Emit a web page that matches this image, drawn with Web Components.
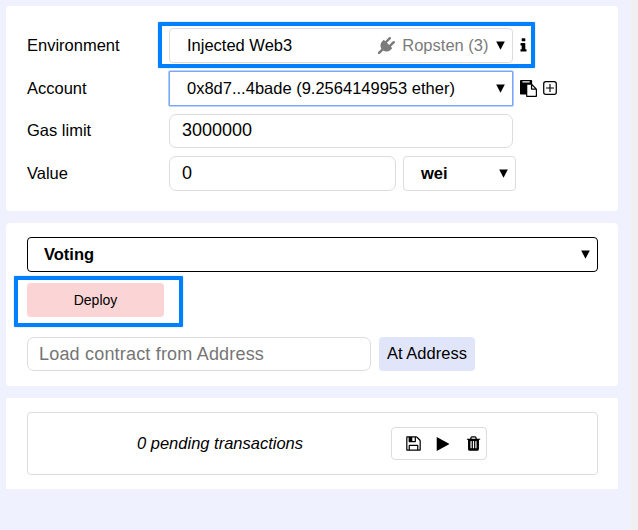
<!DOCTYPE html>
<html lang="en">
<head>
<meta charset="utf-8">
<title>Deploy and run</title>
<style>
html,body{margin:0;height:100%;overflow:hidden}
body{font:16.5px/20px "Liberation Sans",Arial,sans-serif;color:#000;background:#eff1ff}
</style>
</head>
<body>
<run-app></run-app>
<script>
const define = (name, markup, init) => {
  customElements.define(name, class extends HTMLElement {
    constructor() {
      super();
      this.attachShadow({ mode: 'open' }).innerHTML = markup;
    }
    connectedCallback() { if (init) init(this, this.shadowRoot); }
  });
};

const icons = {
  plug: '<path d="M1755 453q37 38 37 90.5t-37 90.5l-401 400 150 150-160 160q-163 163-389.5 186.5t-411.5-100.5l-362 362h-181v-181l362-362q-124-185-100.5-411.5t186.5-389.5l160-160 150 150 400-401q38-37 91-37t90 37 37 90.5-37 90.5l-400 401 234 234 401-400q38-37 91-37t90 37z"/>',
  info: '<path d="M1216 1344v128q0 26-19 45t-45 19h-512q-26 0-45-19t-19-45v-128q0-26 19-45t45-19h64v-384h-64q-26 0-45-19t-19-45v-128q0-26 19-45t45-19h384q26 0 45 19t19 45v576h64q26 0 45 19t19 45zm-128-1152v192q0 26-19 45t-45 19h-256q-26 0-45-19t-19-45v-192q0-26 19-45t45-19h256q26 0 45 19t19 45z"/>',
  paste: '<path d="M768 1664h896v-640h-416q-40 0-68-28t-28-68v-416h-384v1152zm256-1440v-64q0-13-9.5-22.5t-22.5-9.5h-704q-13 0-22.5 9.5t-9.5 22.5v64q0 13 9.5 22.5t22.5 9.5h704q13 0 22.5-9.5t9.5-22.5zm256 672h299l-299-299v299zm512 128v672q0 40-28 68t-68 28h-960q-40 0-68-28t-28-68v-160h-544q-40 0-68-28t-28-68v-1344q0-40 28-68t68-28h1088q40 0 68 28t28 68v328q21 13 36 28l408 408q28 28 48 76t20 88z"/>',
  plus: '<rect x="192" y="192" width="1408" height="1408" rx="240" fill="none" stroke="currentColor" stroke-width="140"/><path d="M832 448h128v384h384v128H960v384H832V960H448V832h384z"/>',
  save: '<path d="M512 1536h768v-384h-768v384zm896 0h128v-896q0-14-10-38.5t-20-34.5l-281-281q-10-10-34-20t-39-10v416q0 40-28 68t-68 28h-576q-40 0-68-28t-28-68v-416h-128v1280h128v-416q0-40 28-68t68-28h832q40 0 68 28t28 68v416zm-384-928v-320q0-13-9.5-22.5t-22.5-9.5h-192q-13 0-22.5 9.5t-9.5 22.5v320q0 13 9.5 22.5t22.5 9.5h192q13 0 22.5-9.5t9.5-22.5zm640 32v928q0 40-28 68t-68 28h-1344q-40 0-68-28t-28-68v-1344q0-40 28-68t68-28h928q40 0 88 20t76 48l280 280q28 28 48 76t20 88z"/>',
  play: '<path d="M1576 927l-1328 738q-23 13-39.500 3t-16.500-36v-1472q0-26 16.500-36t39.500 3l1328 738q23 13 23 31t-23 31z"/>',
  trash: '<path d="M704 1376v-704q0-14-9-23t-23-9h-64q-14 0-23 9t-9 23v704q0 14 9 23t23 9h64q14 0 23-9t9-23zm256 0v-704q0-14-9-23t-23-9h-64q-14 0-23 9t-9 23v704q0 14 9 23t23 9h64q14 0 23-9t9-23zm256 0v-704q0-14-9-23t-23-9h-64q-14 0-23 9t-9 23v704q0 14 9 23t23 9h64q14 0 23-9t9-23zm-544-992h448l-48-117q-7-9-17-11h-317q-10 2-17 11zm928 32v64q0 14-9 23t-23 9h-96v948q0 83-47 143.500t-113 60.500h-832q-66 0-113-58.500t-47-141.500v-952h-96q-14 0-23-9t-9-23v-64q0-14 9-23t23-9h309l70-167q15-37 54-63t79-26h320q40 0 79 26t54 63l70 167h309q14 0 23 9t9 23z"/>'
};

define('ui-icon', `<style>
:host{display:block;width:17px;height:17px;flex:none}
svg{display:block;width:100%;height:100%;fill:currentColor}
</style><svg viewBox="0 0 1792 1792"></svg>`,
(el, root) => { root.querySelector('svg').innerHTML = icons[el.getAttribute('name')]; });

define('ui-panel', `<style>
:host{display:block;box-sizing:border-box;width:612px;background:#fff;border-radius:4px}
</style><slot></slot>`);

define('ui-select', `<style>
:host{display:flex;box-sizing:border-box;height:35px;align-items:center;background:#fff;border:1px solid #dcdde0;border-radius:4px;padding:0 7.500px 0 17px;white-space:nowrap}
:host([focused]){border-color:#7aa7f8;border-radius:1px;box-shadow:0 0 0 .6px #7aa7f8}
:host([strong]){border-color:#000;padding-left:16px}
.main{flex:1}
:host([raised]) .main,:host([strong]) .main{padding-bottom:2px}
svg{width:9px;height:9px;flex:none}
</style><span class="main"><slot></slot></span><slot name="extra"></slot><svg viewBox="0 0 9 9"><path d="M.2.4h8.600L4.500 8.800z"/></svg>`);

define('ui-input', `<style>
:host{display:flex;box-sizing:border-box;height:34px;align-items:center;background:#fff;border:1px solid #dcdde0;border-radius:7px;padding:0 12px;font-size:18px;white-space:nowrap}
:host([placeholder]){color:#757575;padding-left:11px;letter-spacing:.19px}
</style><slot></slot>`);

define('ui-button', `<style>
:host{display:flex;box-sizing:border-box;height:34px;align-items:center;justify-content:center;border-radius:4px;background:#e1e5fa;padding-bottom:2px;white-space:nowrap}
:host([kind=deploy]){background:#fbd5d5;font-size:14px;padding-bottom:0}
</style><slot></slot>`);

define('ui-highlight', `<style>
:host{position:absolute;box-sizing:border-box;border:4px solid #0080ff;border-radius:1px;box-shadow:0 0 1px #0080ff;pointer-events:none}
</style>`);

define('form-row', `<style>
:host{display:grid;grid-template-columns:142px auto;height:35px;align-items:center}
:host([raised]) ::slotted([slot=label]){padding-bottom:2px}
.controls{display:flex;align-items:center}
</style><slot name="label"></slot><div class="controls"><slot></slot></div>`);

define('run-settings', `<style>
ui-panel{height:205px;padding:22px 21px 0}
.rows{display:flex;flex-direction:column;gap:7.670px}
.wide{width:344px}
.network{display:flex;gap:7px;align-items:center;color:#7b7b7b;margin-right:7px}
.network span{padding-bottom:2px}
ui-icon[name=info]{margin-left:1.500px}
ui-icon[name=paste]{margin-left:7px}
ui-icon[name=plus]{width:16px;height:16px;margin-left:5px}
.value{width:227px;height:35px}
.gas{padding-bottom:1px}
.unit{width:113px;margin-left:7px;font-weight:700}
</style><ui-panel><div class="rows">
<form-row raised><span slot="label">Environment</span><ui-select class="wide" raised>Injected Web3<span slot="extra" class="network"><ui-icon name="plug"></ui-icon><span>Ropsten (3)</span></span></ui-select><ui-icon name="info"></ui-icon></form-row>
<form-row><span slot="label">Account</span><ui-select class="wide" focused><span>0x8d7...4bade (9.2564149953 ether)</span></ui-select><ui-icon name="paste"></ui-icon><ui-icon name="plus"></ui-icon></form-row>
<form-row raised><span slot="label">Gas limit</span><ui-input class="wide gas">3000000</ui-input></form-row>
<form-row><span slot="label">Value</span><ui-input class="value">0</ui-input><ui-select class="unit">wei</ui-select></form-row>
</div></ui-panel>`);

define('contract-panel', `<style>
ui-panel{height:163px;padding:14px 20px 0 21px}
ui-select{font-weight:700}
ui-button[kind=deploy]{width:137px;margin-top:11px}
.load{display:flex;gap:8px;margin-top:20px}
ui-input{width:344px}
.load ui-button{width:96px}
</style><ui-panel><ui-select strong>Voting</ui-select><ui-button kind="deploy">Deploy</ui-button>
<div class="load"><ui-input placeholder>Load contract from Address</ui-input><ui-button>At Address</ui-button></div></ui-panel>`);

define('transactions-panel', `<style>
ui-panel{height:91px;padding:14px 20px 0 21px;border-radius:0}
.box{box-sizing:border-box;height:63px;border:1px solid #dcdde0;border-radius:4px;display:flex;align-items:center;justify-content:flex-end;padding-right:110px}
em{width:254px;padding-bottom:2px;white-space:nowrap}
.actions{box-sizing:border-box;width:96px;height:33px;border:1px solid #dcdde0;border-radius:4px;display:flex;align-items:center;gap:13px;padding-left:13px}
ui-icon[name=play]{width:16px;height:16px;margin-right:1px}
</style><ui-panel><div class="box"><em>0 pending transactions</em><div class="actions"><ui-icon name="save"></ui-icon><ui-icon name="play"></ui-icon><ui-icon name="trash"></ui-icon></div></div></ui-panel>`);

define('run-app', `<style>
:host{display:grid;grid-template-columns:1fr 7px;width:638px;height:530px;position:relative;background:#eff1ff}
main{display:flex;flex-direction:column;gap:12px;padding:6px}
aside{background:#f0f0f0}
.env{left:158px;top:22px;width:377px;height:46px}
.deploy{left:14px;top:276px;width:169px;height:51px}
</style><main><run-settings></run-settings><contract-panel></contract-panel><transactions-panel></transactions-panel></main><aside></aside>
<ui-highlight class="env"></ui-highlight><ui-highlight class="deploy"></ui-highlight>`);
</script>
</body>
</html>
